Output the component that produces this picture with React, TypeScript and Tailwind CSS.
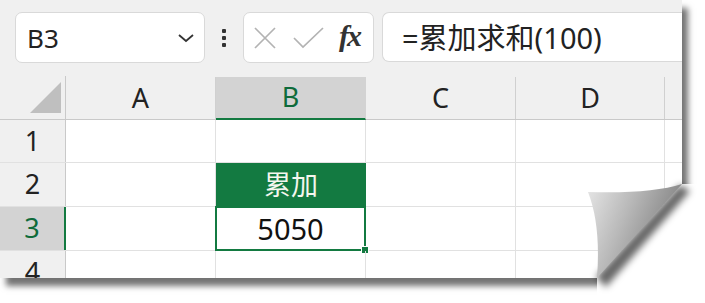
import React from "react"

const font = { fontFamily: "'Noto Sans', 'Noto Sans CJK SC', sans-serif" }

const cols = ["A", "B", "C", "D"]

function HeaderRow() {
  return (
    <div className="flex h-[43px] bg-[#f0f0f0] border-b border-[#c9c9c9]">
      {/* corner */}
      <div className="relative w-[66px] shrink-0 border-r border-[#c9c9c9] -mt-px">
        <svg className="absolute left-[30px] top-[6px]" width="32" height="31" viewBox="0 0 32 31">
          <polygon points="31,0 31,31 0,31" fill="#bfbfbf" />
        </svg>
      </div>
      {cols.map((c, i) => (
        <div
          key={c}
          className={
            c === "B"
              ? "w-[150px] shrink-0 flex items-center justify-center bg-[#d3d3d3] border-b-2 border-[#137a41] text-[#0e6b3a] text-[27px] -mb-px border-r border-r-[#d3d3d3]"
              : i === 3
              ? "w-[149px] shrink-0 flex items-center justify-center border-r border-[#d0d0d0] text-[#222] text-[27px]"
              : "w-[150px] shrink-0 flex items-center justify-center border-r border-[#d0d0d0] text-[#222] text-[27px]"
          }
        >
          {c}
        </div>
      ))}
      <div className="flex-1" />
    </div>
  )
}

function Row({ n, h, children }: { n: number; h: string; children?: React.ReactNode[] }) {
  const selected = n === 3
  return (
    <div className={`flex ${h} border-b border-[#e1e1e1]`}>
      <div
        className={
          selected
            ? "w-[66px] shrink-0 flex items-center justify-center bg-[#d3d3d3] border-r-2 border-[#137a41] text-[#0e6b3a] text-[27px]"
            : "w-[66px] shrink-0 flex items-center justify-center bg-[#f0f0f0] border-r border-[#c9c9c9] text-[#222] text-[27px]"
        }
      >
        {n}
      </div>
      {cols.map((c, i) => (
        <div
          key={c}
          className={`${i === 3 ? "w-[149px]" : "w-[150px]"} shrink-0 border-r border-[#e1e1e1] relative`}
        >
          {children?.[i]}
        </div>
      ))}
      <div className="flex-1" />
    </div>
  )
}

export default function App() {
  return (
    <div className="relative w-[705px] h-[303px] bg-white overflow-hidden" style={font}>
      <div className="w-[682px] h-[278px] bg-white overflow-hidden shadow-[6px_8px_6px_rgba(0,0,0,0.55)]">
        {/* toolbar */}
        <div className="h-[77px] bg-[#f0f0f0] flex items-start pt-[12px]">
          <div className="ml-[15px] w-[190px] h-[51px] bg-white border border-[#d9d9d9] rounded-[7px] flex items-center pl-[11px] pr-[9px]">
            <span className="text-[26px] text-[#222] flex-1 leading-none">B3</span>
            <svg width="18" height="10" viewBox="0 0 18 10">
              <path d="M2 2 L9 8 L16 2" fill="none" stroke="#333" strokeWidth="1.8" />
            </svg>
          </div>
          <div className="w-[38px] h-[51px] flex flex-col items-center justify-center gap-[3px]">
            <div className="w-[4px] h-[4px] bg-[#333] rounded-[1px]" />
            <div className="w-[4px] h-[4px] bg-[#333] rounded-[1px]" />
            <div className="w-[4px] h-[4px] bg-[#333] rounded-[1px]" />
          </div>
          <div className="w-[131px] h-[51px] bg-white border border-[#d9d9d9] rounded-[7px] flex items-center pl-[9px]">
            <svg width="24" height="24" viewBox="0 0 24 24">
              <path d="M2 2 L22 22 M22 2 L2 22" stroke="#b3b3b3" strokeWidth="1.7" />
            </svg>
            <svg className="ml-[16px]" width="31" height="22" viewBox="0 0 31 22">
              <path d="M1 11 L10 20 L30 1" fill="none" stroke="#b3b3b3" strokeWidth="1.7" />
            </svg>
            <span
              className="ml-[15px] text-[30px] italic font-bold text-[#333] leading-none -mt-[4px] tracking-[-2px]"
              style={{ fontFamily: "'Liberation Serif', 'DejaVu Serif', serif" }}
            >
              fx
            </span>
          </div>
          <div className="ml-[8px] flex-1 h-[50px] bg-white border border-r-0 border-[#d9d9d9] rounded-l-[7px] flex items-center pl-[19px]">
            <span className="text-[29px] text-[#222] leading-none">=累加求和(100)</span>
          </div>
        </div>

        <HeaderRow />
        <Row n={1} h="h-[43px]" />
        <Row
          n={2}
          h="h-[44px]"
          children={[
            null,
            <div className="absolute inset-0 -right-px -bottom-px bg-[#137a41] flex items-center justify-center text-[27px] text-[#f4f6ee]">
              累加
            </div>,
            null,
            null,
          ]}
        />
        <Row
          n={3}
          h="h-[44px]"
          children={[
            null,
            <div className="absolute -left-[1px] -top-[1px] -right-[1px] -bottom-[1px] border-2 border-[#137a41] flex items-center justify-center text-[29px] text-[#111]">
              5050
              <div className="absolute -right-[5px] -bottom-[5px] w-[8px] h-[8px] bg-[#137a41] border border-white" />
            </div>,
            null,
            null,
          ]}
        />
        <Row n={4} h="h-[44px]" />
      </div>

      {/* page curl */}
      <svg className="absolute left-[580px] top-[175px]" width="125" height="128" viewBox="0 0 125 128">
        <defs>
          <linearGradient id="curl" x1="0" y1="0" x2="1" y2="0.4">
            <stop offset="0" stopColor="#e6e6e6" />
            <stop offset="0.45" stopColor="#b9b9b9" />
            <stop offset="1" stopColor="#7d7d7d" />
          </linearGradient>
          <filter id="blur" x="-50%" y="-50%" width="200%" height="200%">
            <feGaussianBlur stdDeviation="3.5" />
          </filter>
        </defs>
        <polygon points="102,9 125,9 125,128 17,128 17,103" fill="#ffffff" />
        <polygon points="100,10 110,16 26,112 16,102" fill="rgba(0,0,0,0.6)" filter="url(#blur)" />
        <path d="M8 17 Q 70 19 102 9 L 17 103 Q 21 50 8 17 Z" fill="url(#curl)" />
      </svg>
    </div>
  )
}
